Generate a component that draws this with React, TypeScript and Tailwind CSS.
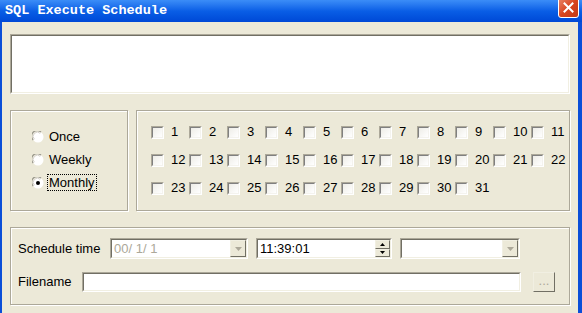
const sunkenOuter = "border border-t-[#ACA899] border-l-[#ACA899] border-b-white border-r-white";
const sunkenInner = "border border-t-[#716F64] border-l-[#716F64] border-b-[#F1EFE2] border-r-[#F1EFE2]";
const raised = "border border-t-[#F1EFE2] border-l-[#F1EFE2] border-b-[#716F64] border-r-[#716F64] bg-[#ECE9D8]";
const groupBox = "border border-[#ACA899] shadow-[inset_1px_1px_0_#fff,1px_1px_0_#fff]";

function Radio({ label, checked }: { label: string; checked?: boolean }) {
  return (
    <div className="flex items-center h-[23px]">
      <svg width="12" height="12" viewBox="0 0 12 12" className="shrink-0">
        <circle cx="6" cy="6" r="5.5" fill="#fff" />
        <path d="M1.2 9 A5.3 5.3 0 0 1 9 1.2" fill="none" stroke="#9A988C" strokeWidth="1.2" />
        <path d="M2.4 8.2 A4 4 0 0 1 8.2 2.4" fill="none" stroke="#D4D0C8" strokeWidth="1" />
        {checked && <circle cx="6" cy="6" r="2" fill="#000" />}
      </svg>
      <span
        className={
          "ml-[3px] px-[1px] leading-[15px] border border-dotted " +
          (checked ? "border-black" : "border-transparent")
        }
      >
        {label}
      </span>
    </div>
  );
}

function Check({ n }: { n: number }) {
  return (
    <div className="flex items-center h-[28px]">
      <div className={"w-[13px] h-[13px] shrink-0 " + sunkenOuter}>
        <div className="w-full h-full border border-t-[#808080] border-l-[#808080] border-b-[#F4F3EE] border-r-[#F4F3EE] bg-gradient-to-br from-[#EEEDE7] to-white" />
      </div>
      <span className="ml-[7px]">{n}</span>
    </div>
  );
}

function DropButton() {
  return (
    <div className={"w-[16px] h-full flex items-center justify-center shrink-0 " + raised}>
      <svg width="7" height="4" viewBox="0 0 7 4">
        <path d="M0 0 H7 L3.5 4 Z" fill="#ACA899" />
      </svg>
    </div>
  );
}

function SpinHalf({ up }: { up?: boolean }) {
  return (
    <div className={"flex-1 flex items-center justify-center " + raised}>
      <svg width="5" height="3" viewBox="0 0 5 3">
        <path d={up ? "M0 3 H5 L2.5 0 Z" : "M0 0 H5 L2.5 3 Z"} fill="#000" />
      </svg>
    </div>
  );
}

export default function App() {
  const days = Array.from({ length: 31 }, (_, i) => i + 1);
  return (
    <div className="w-[582px] h-[313px] overflow-hidden flex flex-col bg-[#ECE9D8] font-['Liberation_Sans',Arial,sans-serif] text-[13px] text-black">
      {/* title bar */}
      <div className="h-[22px] shrink-0 flex items-start bg-gradient-to-b from-[#3B8DF7] via-[#0A5EE6] to-[#0048D6]">
        <span className="pl-[5px] pt-[2px] font-['Liberation_Mono',monospace] font-bold text-[13.5px] leading-[17px] text-white">
          SQL Execute Schedule
        </span>
        <div className="ml-auto mr-[3px] -mt-[3px] w-[21px] h-[21px] rounded-[3px] border border-white bg-gradient-to-br from-[#E88467] via-[#D9451E] to-[#C23A16] flex items-center justify-center">
          <svg width="11" height="11" viewBox="0 0 11 11">
            <path d="M1.5 1.5 L9.5 9.5 M9.5 1.5 L1.5 9.5" stroke="#fff" strokeWidth="2" strokeLinecap="square" />
          </svg>
        </div>
      </div>

      {/* body */}
      <div className="flex-1 flex flex-col border-l-2 border-r-4 border-[#0A4ED8] px-[8px]">
        <div className={"mt-[12px] h-[60px] " + sunkenOuter}>
          <div className={"w-full h-full bg-white " + sunkenInner} />
        </div>

        <div className="mt-[16px] flex gap-[8px] h-[101px]">
          <div className={"w-[120px] flex flex-col pl-[21px] pt-[14px] " + groupBox}>
            <Radio label="Once" />
            <Radio label="Weekly" />
            <Radio label="Monthly" checked />
          </div>
          <div className={"flex-1 pl-[14px] pt-[7px] grid grid-cols-[repeat(11,38px)] content-start " + groupBox}>
            {days.map((d) => (
              <Check key={d} n={d} />
            ))}
          </div>
        </div>

        <div className={"mt-[16px] h-[78px] flex flex-col pl-[7px] pt-[10px] " + groupBox}>
          <div className="flex items-center h-[21px]">
            <span className="w-[92px]">Schedule time</span>
            <div className={"w-[138px] h-full " + sunkenOuter}>
              <div className={"w-full h-full flex bg-white " + sunkenInner}>
                <span className="flex-1 pl-[2px] leading-[17px] text-[#ACA899]">00/ 1/ 1</span>
                <DropButton />
              </div>
            </div>
            <div className={"ml-[8px] w-[136px] h-full " + sunkenOuter}>
              <div className={"w-full h-full flex bg-white " + sunkenInner}>
                <span className="flex-1 pl-[2px] leading-[17px]">11:39:01</span>
                <div className="w-[15px] h-full flex flex-col">
                  <SpinHalf up />
                  <SpinHalf />
                </div>
              </div>
            </div>
            <div className={"ml-[8px] w-[120px] h-full " + sunkenOuter}>
              <div className={"w-full h-full flex bg-white " + sunkenInner}>
                <span className="flex-1" />
                <DropButton />
              </div>
            </div>
          </div>
          <div className="flex items-center h-[20px] mt-[13px]">
            <span className="w-[64px]">Filename</span>
            <div className={"w-[439px] h-full " + sunkenOuter}>
              <div className={"w-full h-full bg-white " + sunkenInner} />
            </div>
            <div className={"ml-[12px] w-[22px] h-full flex items-center justify-center text-[#ACA899] leading-none pb-[3px] " + raised}>
              ...
            </div>
          </div>
        </div>
      </div>
    </div>
  );
}
